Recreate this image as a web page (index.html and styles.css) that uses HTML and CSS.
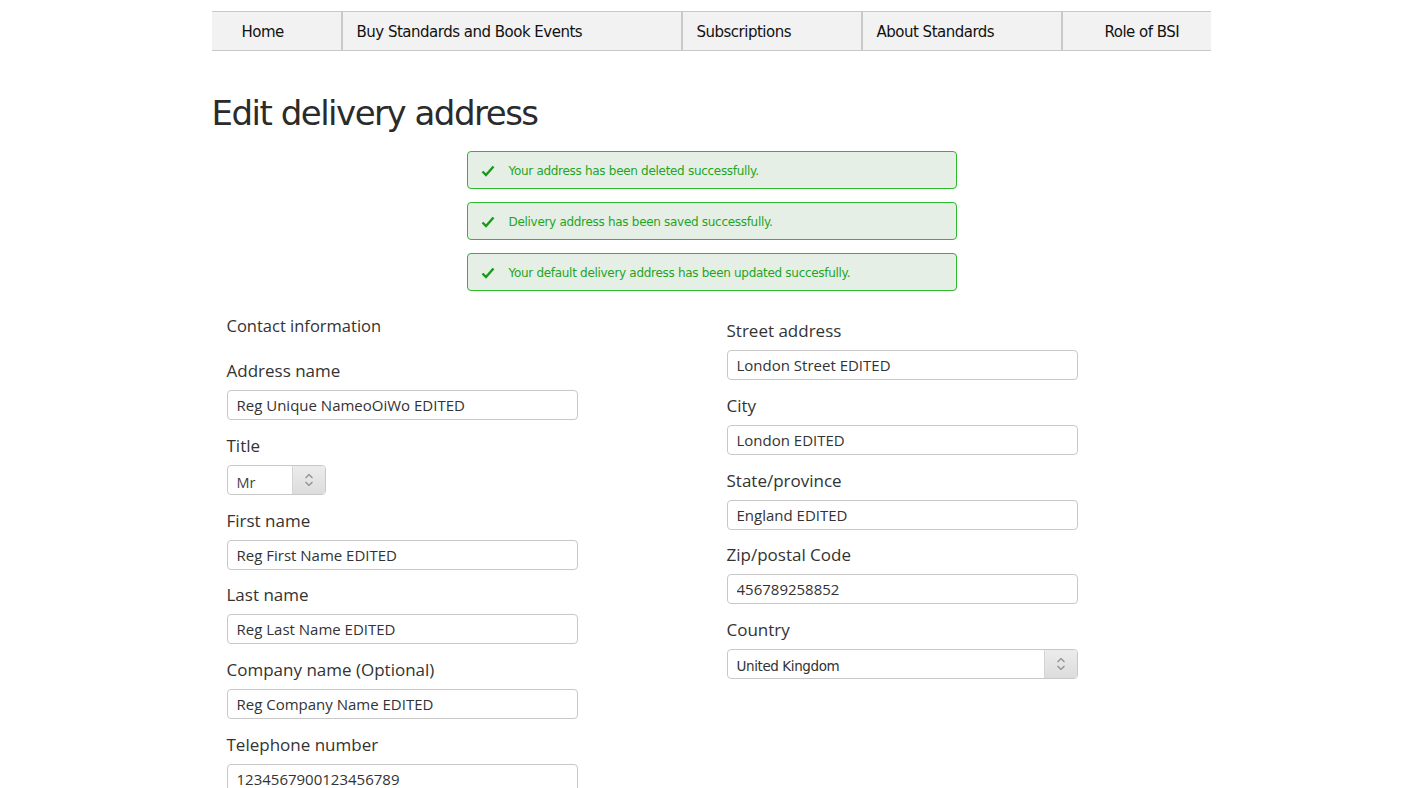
FILE: index.html
```html
<!DOCTYPE html>
<html lang="en">
<head>
<meta charset="utf-8">
<title>Edit delivery address</title>
<link rel="stylesheet" href="styles.css">
</head>
<body>
<div class="page">
  <nav class="nav">
    <a class="nav-item nav-home" href="#">Home</a>
    <a class="nav-item nav-buy" href="#">Buy Standards and Book Events</a>
    <a class="nav-item nav-subs" href="#">Subscriptions</a>
    <a class="nav-item nav-about" href="#">About Standards</a>
    <a class="nav-item nav-role" href="#">Role of BSI</a>
  </nav>

  <h1 class="title">Edit delivery address</h1>

  <div class="alerts">
    <div class="alert"><svg class="check" width="14" height="12" viewBox="0 0 14 12"><path d="M1.5 6.5 L5 10 L12.5 1.5" fill="none" stroke="#179a17" stroke-width="2.4"/></svg><span>Your address has been deleted successfully.</span></div>
    <div class="alert"><svg class="check" width="14" height="12" viewBox="0 0 14 12"><path d="M1.5 6.5 L5 10 L12.5 1.5" fill="none" stroke="#179a17" stroke-width="2.4"/></svg><span>Delivery address has been saved successfully.</span></div>
    <div class="alert"><svg class="check" width="14" height="12" viewBox="0 0 14 12"><path d="M1.5 6.5 L5 10 L12.5 1.5" fill="none" stroke="#179a17" stroke-width="2.4"/></svg><span>Your default delivery address has been updated succesfully.</span></div>
  </div>

  <form class="form">
    <div class="col col-left">
      <div class="section-title">Contact information</div>
      <div class="field">
        <label class="label">Address name</label>
        <input class="input" type="text" value="Reg Unique NameoOiWo EDITED">
      </div>
      <div class="field">
        <label class="label">Title</label>
        <div class="select select-title">
          <span class="select-value">Mr</span>
          <span class="select-arrow"><svg width="10" height="16" viewBox="0 0 10 16"><path d="M1.5 6 L5 2.5 L8.5 6 M1.5 10 L5 13.5 L8.5 10" fill="none" stroke="#8a8a8a" stroke-width="1.1"/></svg></span>
        </div>
      </div>
      <div class="field">
        <label class="label">First name</label>
        <input class="input" type="text" value="Reg First Name EDITED">
      </div>
      <div class="field">
        <label class="label">Last name</label>
        <input class="input" type="text" value="Reg Last Name EDITED">
      </div>
      <div class="field">
        <label class="label">Company name (Optional)</label>
        <input class="input" type="text" value="Reg Company Name EDITED">
      </div>
      <div class="field">
        <label class="label">Telephone number</label>
        <input class="input" type="text" value="1234567900123456789">
      </div>
    </div>
    <div class="col col-right">
      <div class="field">
        <label class="label">Street address</label>
        <input class="input" type="text" value="London Street EDITED">
      </div>
      <div class="field">
        <label class="label">City</label>
        <input class="input" type="text" value="London EDITED">
      </div>
      <div class="field">
        <label class="label">State/province</label>
        <input class="input" type="text" value="England EDITED">
      </div>
      <div class="field">
        <label class="label">Zip/postal Code</label>
        <input class="input" type="text" value="456789258852">
      </div>
      <div class="field">
        <label class="label">Country</label>
        <div class="select select-country">
          <span class="select-value">United Kingdom</span>
          <span class="select-arrow"><svg width="10" height="16" viewBox="0 0 10 16"><path d="M1.5 6 L5 2.5 L8.5 6 M1.5 10 L5 13.5 L8.5 10" fill="none" stroke="#8a8a8a" stroke-width="1.1"/></svg></span>
        </div>
      </div>
    </div>
  </form>
</div>
</body>
</html>
```

FILE: styles.css
```css
* { box-sizing: border-box; }
html, body { margin: 0; padding: 0; background: #fff; }
body { font-family: "DejaVu Sans", Tahoma, sans-serif; color: #333; }

.page {
  width: 1000px;
  margin: 0 auto;
  padding-top: 11px;
}

.nav {
  display: flex;
  width: 999px;
  height: 40px;
  background: #f2f2f2;
  border-top: 1px solid #c9c9c9;
  border-bottom: 1px solid #c9c9c9;
}
.nav-item {
  display: flex;
  align-items: center;
  color: #111;
  text-decoration: none;
  font-family: "DejaVu Sans", Tahoma, sans-serif;
  font-size: 15px;
  letter-spacing: -0.5px;
  padding-top: 2px;
  border-left: 2px solid #c9c9c9;
  padding-left: 14px;
}
.nav-home { width: 129px; border-left: none; padding-left: 30px; }
.nav-buy { width: 340px; }
.nav-subs { width: 180px; }
.nav-about { width: 200px; }
.nav-role { width: 150px; padding-left: 42px; }

.title {
  margin: 41px 0 0 0;
  font-family: "DejaVu Sans", Tahoma, sans-serif;
  font-weight: normal;
  font-size: 34px;
  letter-spacing: -1.5px;
  line-height: 42px;
  color: #2b2b2b;
}

.alerts {
  width: 490px;
  margin: 17px auto 0;
  display: flex;
  flex-direction: column;
  gap: 13px;
}
.alert {
  height: 38px;
  display: flex;
  align-items: center;
  background: #e6efe6;
  border: 1px solid #2cb92c;
  border-radius: 4px;
  padding-left: 13px;
  padding-top: 1px;
  color: #1fa51f;
  font-family: "DejaVu Sans", Tahoma, sans-serif;
  font-size: 12px;
  letter-spacing: -0.3px;
}
.check { margin-right: 14px; flex: none; }

.form {
  display: flex;
  margin-top: 24px;
}
.col {
  width: 500px;
  padding: 0 15px;
}
.col-right { padding-top: 5px; }

.section-title {
  font-family: "Open Sans", sans-serif;
  font-size: 16.5px;
  line-height: 22px;
  color: #333;
  height: 45px;
}
.field {
  display: flex;
  flex-direction: column;
  margin-bottom: 14.8px;
}
.label {
  font-family: "Open Sans", sans-serif;
  font-size: 17px;
  line-height: 22px;
  color: #333;
  margin-bottom: 8px;
}
.input {
  width: 351px;
  height: 30px;
  margin: 0;
  border: 1px solid #c8c8c8;
  border-radius: 4px;
  padding: 0 0 0 9px;
  font-family: "Open Sans", sans-serif;
  font-size: 15px;
  color: #333;
  background: #fff;
  outline: none;
}

.select {
  display: flex;
  height: 30px;
  border: 1px solid #c8c8c8;
  border-radius: 4px;
  overflow: hidden;
  background: #fff;
}
.select-title { width: 99px; }
.select-country { width: 351px; }
.select-value {
  flex: 1;
  padding: 8px 0 0 9px;
  font-family: "DejaVu Sans", Tahoma, sans-serif;
  font-size: 13.5px;
  letter-spacing: -0.4px;
  color: #333;
  white-space: nowrap;
}
.select-title .select-value {
  font-family: "Open Sans", sans-serif;
  font-size: 14.5px;
  letter-spacing: 0;
  color: #444;
  padding-top: 7px;
}
.select-arrow {
  width: 33px;
  display: flex;
  align-items: center;
  justify-content: center;
  border-left: 1px solid #d4d4d4;
  background: linear-gradient(#ececec, #dcdcdc);
}
```
